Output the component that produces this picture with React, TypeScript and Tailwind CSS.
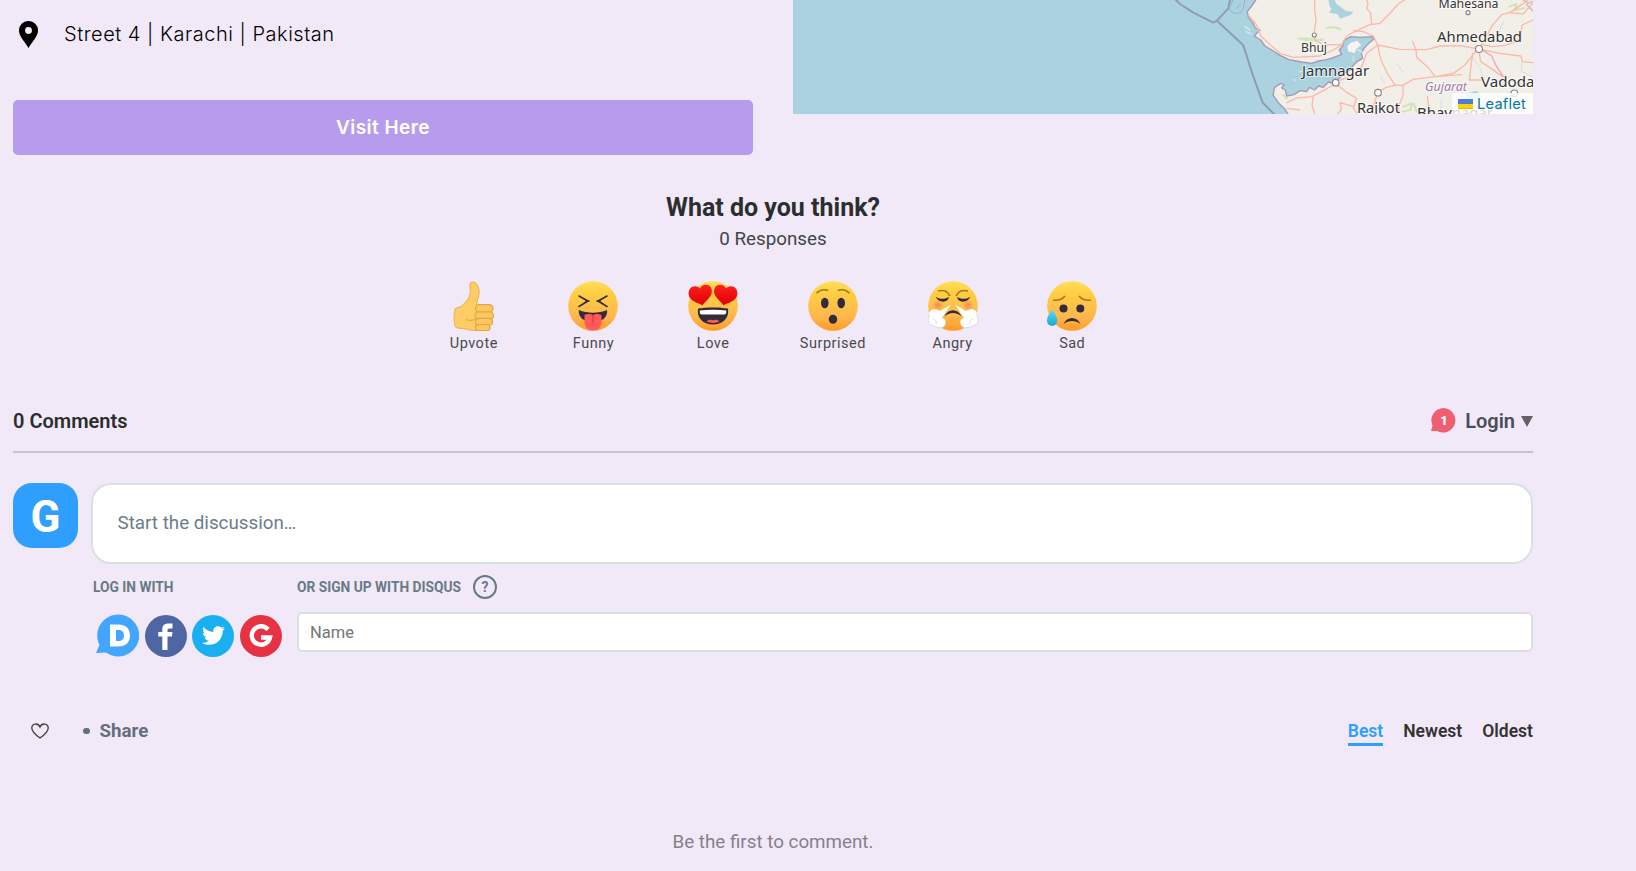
import React from "react";
import { FaTwitter } from "react-icons/fa";

function MapPreview() {
  return (
    <svg viewBox="793 0 740 114" width="740" height="114" className="block h-[114px] w-[740px]">
      <rect x="793" width="740" height="114" fill="#aad3df" />
      <g transform="translate(1140 0) scale(0.33333)" fill="none" strokeLinejoin="round" strokeLinecap="round">
        <path
          d="M350 -4L335 18L322 35L325 52L338 68L346 84L360 90L350 100L343 108L362 120L375 138L400 153L420 166L447 179L485 186L515 190L535 183L560 179L580 173L605 163L598 150L608 138L612 122L632 110L660 112L698 110L701 118L688 128L672 145L664 160L668 175L652 184L640 196L632 208L610 222L596 236L578 250L565 246L550 262L535 258L524 270L508 262L500 275L480 272L462 284L440 288L436 270L425 264L432 254L422 250L404 262L399 285L415 308L435 328L446 345L1190 345L1190 -4Z"
          fill="#f2efe9"
          stroke="#a597b8"
          strokeWidth="4"
        />
        <path d="M618 128L650 117L688 120L672 138L655 160L640 148L622 158L612 150Z" fill="#aad3df" />
        <path d="M632 128L652 122L664 136L648 146L645 160L624 154L622 138Z" fill="#f6f5ef" />
        <path d="M565 -4L568 15L574 28L567 38L592 42L600 56L618 50L632 45L640 36L618 32L606 24L590 12L582 -4Z" fill="#aad3df" />
        <path d="M465 113L500 112L525 116L553 115L550 123L510 125L480 120Z" fill="#d5e5bd" />
        <path d="M560 85C575 80 590 82 600 88M1108 20L1130 12L1125 30L1155 24M790 320L815 310L812 330L785 335M430 285L440 295M640 170V182M822 312L830 335" stroke="#cfe3b5" strokeWidth="6" />
        <path d="M1150 0L1165 10L1180 4M1160 14L1180 34" stroke="#c9bfd0" strokeWidth="5" />
        <path d="M975 282L1010 272L1025 290L990 298Z" fill="#aad3df" />
        <g stroke="#c5dfe6" strokeWidth="2.5">
          <path d="M1000 175L1022 205L1030 240M1090 65L1075 100L1100 125M770 190L788 215M905 300L900 340M1080 260L1110 240L1150 252M720 230L735 250M930 215L945 232M1145 185V215L1178 230" />
        </g>
        <g stroke="#fbb9a8" strokeWidth="4">
          <path d="M524 -4V30L528 60L522 103L525 120L550 135L606 133L620 108L650 92L690 74L720 70L748 42L775 12L800 -4" />
          <path d="M325 45L350 75L362 108L395 138L420 160L460 172L540 168L580 150L606 133M695 72L692 40L680 25L684 10L678 -4M640 92L670 95L700 108L713 135L780 148L860 149L900 138L960 137L1010 146" />
          <path d="M713 135L722 178L742 220L766 256L788 256L820 238L886 230L940 220L975 195L1010 150M713 135L680 160L665 200L640 226L600 240M818 125L828 150L830 172L862 200L886 230L965 224M1020 140L1036 115L1056 78L1085 44L1110 38L1150 42L1178 10M1110 38L1165 0" />
          <path d="M1030 135L1060 140L1095 136L1142 120L1146 75L1180 60M1030 150L1080 160L1142 168L1148 185L1180 188M1018 160L1022 185L1045 200L1088 230M998 160L988 240H1030M766 256L738 262L714 278L700 315M788 256L790 285L775 320L778 345M592 255L622 278L650 295L640 325L655 345M580 255L550 272L515 290L470 294L440 308M520 290L516 315L525 345M650 295L642 320L600 308L604 328L590 345M442 325L478 330M862 290L866 320L882 345" />
        </g>
        <path d="M1030 152L1055 168L1070 200L1090 230" stroke="#f1a3bd" strokeWidth="4" />
        <path d="M104 -4L120 12L160 38L220 68L231 62L265 25L271 -4M231 62L310 136L335 215L368 308L405 345" stroke="#8f9bb8" strokeWidth="6" />
        <path d="M280 -2L268 25C280 50 305 42 310 25L315 -2M290 25L302 12" stroke="#93b5cb" strokeWidth="3" />
        <path d="M315 80L330 90M318 95L335 102M462 239L465 241M480 215L484 214M648 147L668 158" stroke="#dcebed" strokeWidth="4" />
        <g fill="#fff" stroke="#8a8580" strokeWidth="3.5">
          <circle cx="523" cy="105" r="6" />
          <circle cx="984" cy="38" r="6" />
          <circle cx="1017" cy="147" r="10.5" />
          <circle cx="587" cy="248" r="10" />
          <circle cx="714" cy="278" r="10" />
          <circle cx="1123" cy="280" r="10" />
        </g>
      </g>
      <g fontFamily="'Noto Sans', sans-serif" fill="#333" stroke="#fff" strokeOpacity="0.7" strokeWidth="2" paintOrder="stroke">
        <text x="1438.5" y="8" fontSize="12.5" textLength="60" lengthAdjust="spacingAndGlyphs">Mahesana</text>
        <text x="1301" y="52" fontSize="13" textLength="26" lengthAdjust="spacingAndGlyphs">Bhuj</text>
        <text x="1437" y="42" fontSize="15" textLength="85" lengthAdjust="spacingAndGlyphs">Ahmedabad</text>
        <text x="1302" y="76" fontSize="15" textLength="67" lengthAdjust="spacingAndGlyphs">Jamnagar</text>
        <text x="1425" y="91" fontSize="13" fontStyle="italic" fill="#9c7ba6" textLength="42" lengthAdjust="spacingAndGlyphs">Gujarat</text>
        <text x="1481" y="87" fontSize="15" textLength="68" lengthAdjust="spacingAndGlyphs">Vadodara</text>
        <text x="1357" y="113" fontSize="15" textLength="43" lengthAdjust="spacingAndGlyphs">Rajkot</text>
        <text x="1417" y="118" fontSize="15" textLength="76" lengthAdjust="spacingAndGlyphs">Bhavnagar</text>
      </g>
    </svg>
  );
}

function Face({ children }: { children: React.ReactNode }) {
  return (
    <svg viewBox="0 0 50 50" className="size-[50px]" fill="none">
      <defs>
        <linearGradient id="skin" x1="0" y1="0" x2="0" y2="1">
          <stop offset="0" stopColor="#ffe05a" />
          <stop offset="0.25" stopColor="#fecd41" />
          <stop offset="0.7" stopColor="#feb84e" />
          <stop offset="1" stopColor="#ff9b27" />
        </linearGradient>
        <linearGradient id="heart" x1="0" y1="0" x2="0" y2="1">
          <stop offset="0" stopColor="#ff2020" />
          <stop offset="1" stopColor="#dd0000" />
        </linearGradient>
        <linearGradient id="drop" x1="0" y1="0" x2="0" y2="1">
          <stop offset="0" stopColor="#66d8f5" />
          <stop offset="1" stopColor="#16a9d5" />
        </linearGradient>
        <radialGradient id="blush">
          <stop offset="0" stopColor="#fa7768" stopOpacity="0.9" />
          <stop offset="1" stopColor="#fa8a58" stopOpacity="0" />
        </radialGradient>
      </defs>
      {children}
    </svg>
  );
}

const disc = <circle cx="25" cy="25" r="24.8" fill="url(#skin)" />;

const thumb = (
  <Face>
    <g transform="translate(2.5 0.3)">
      <path d="M18.500 13C19.500 9 18 5 18.500 2.500C19 0 23 .2 25 2.500C28 6 28.500 13 26 18L25 24L27 47.500C25 50 20 49.500 16 48L5 46.500C2 45 1.800 32 4 27C7 26 10 25.500 12 23C16 19 17.500 17 18.500 13Z" fill="#fecc65" stroke="#e5b052" strokeWidth="1" />
      <path d="M14 38C18 40 22 39 26 37" stroke="#d89b3c" strokeWidth="0.8" />
      <g fill="#fdc75d" stroke="#dda84a" strokeWidth="1.200">
        <rect x="24" y="23.300" width="17.500" height="8" rx="4" />
        <rect x="23.500" y="30.500" width="18.500" height="7.500" rx="3.700" />
        <rect x="24" y="37" width="17" height="7" rx="3.500" />
        <rect x="24" y="43.200" width="14.500" height="6.200" rx="3" />
      </g>
    </g>
  </Face>
);

const funny = (
  <Face>
    {disc}
    <path d="M11 15L20 20L11 25.500M39 15L30 20L39 25.500" stroke="#302b3d" strokeWidth="1.500" strokeLinecap="round" />
    <path d="M14 17L22.500 20L14 23L18 20ZM36 17L27.500 20L36 23L32 20Z" fill="#302b3d" />
    <path d="M10.800 29C19 32.500 31 32.500 39 29C40 36 34.500 41 25 41C15.500 41 10 36 10.800 29Z" fill="#302b3d" />
    <path d="M16.500 34C19 32.500 23 32.500 25 34C27 32.500 31 32.500 33.500 34V41C33.500 46 30 49.500 25 49.500C20 49.500 16.500 46 16.500 41Z" fill="#ff5a58" />
    <path d="M25 34V42" stroke="#d93140" strokeWidth="1" />
  </Face>
);

const love = (
  <Face>
    {disc}
    <path d="M.6 13C.3 8 4 4.300 8.500 5.500C10 5.700 11 6.500 12 7.500C13 4.500 17 2.800 20.500 4.300C24 6 25 11 22.500 15C20.500 18.500 16 21.500 14.500 24.300C11 22 1 20.500 .6 13Z" fill="url(#heart)" />
    <path d="M49.400 13C49.700 8 46 4.300 41.500 5.500C40 5.700 39 6.500 38 7.500C37 4.500 33 2.800 29.500 4.300C26 6 25 11 27.500 15C29.500 18.500 34 21.500 35.500 24.300C39 22 49 20.500 49.400 13Z" fill="url(#heart)" />
    <path d="M10 27.500C18 26 32 26 40 27.500C41.500 37 35 43.500 25 43.500C15 43.500 8.500 37 10 27.500Z" fill="#302b3d" />
    <path d="M11.800 29.500C20 28.500 30 28.500 38.200 29.500C38.500 32 38 33.500 36 33.500H14C12 33.500 11.500 32 11.800 29.500Z" fill="#fff" />
    <path d="M18.500 40.500C20 38.300 23 38.300 25 39.200C27 38.300 30 38.300 31.500 40.500C28 42.400 22 42.400 18.500 40.500Z" fill="#ff5a58" />
  </Face>
);

const surprised = (
  <Face>
    {disc}
    <path d="M8.500 12.200C12 8.800 16 8 20.300 9.600M41.500 12.200C38 8.800 34 8 29.700 9.600" stroke="#9c7a22" strokeWidth="1.600" />
    <ellipse cx="16.800" cy="22" rx="3.800" ry="5.200" fill="#302b3d" />
    <ellipse cx="33.200" cy="22" rx="3.800" ry="5.200" fill="#302b3d" />
    <ellipse cx="25" cy="38.200" rx="4.200" ry="4.500" fill="#302b3d" />
  </Face>
);

const angry = (
  <Face>
    {disc}
    <circle cx="10" cy="24" r="6" fill="url(#blush)" />
    <circle cx="40" cy="24" r="6" fill="url(#blush)" />
    <path d="M10 10C15 8.500 20 10 21.800 15M40 10C35 8.500 30 10 28.200 15" stroke="#9c7a22" strokeWidth="1.500" />
    <path d="M7.500 15.500C11 18.500 17 18.500 21 16C20 22.300 10.500 22.300 7.500 15.500ZM42.500 15.500C39 18.500 33 18.500 29 16C30 22.300 39.500 22.300 42.500 15.500Z" fill="#302b3d" />
    <path d="M23 23.500L12 30C6 26 0 29 1.500 34C-1 39 0 44 5 44.500C9 47 15 48 17 44C19 39 16 37 14 37ZM27 23.500L38 30C44 26 50 29 48.500 34C51 39 50 44 45 44.500C41 47 35 48 33 44C31 39 34 37 36 37Z" fill="#fff" />
    <path d="M1.500 34C-1 39 0 44 5 44.500C9 47 15 48 17 44M48.500 34C51 39 50 44 45 44.500C41 47 35 48 33 44M8 43C9 40 7 38 5 38M42 43C41 40 43 38 45 38" stroke="#d7dde5" strokeWidth="1" />
    <path d="M16.500 35.500C20 27.300 30 27.300 33.500 35.500C29 30.800 21 30.800 16.500 35.500Z" fill="#302b3d" />
  </Face>
);

const sad = (
  <Face>
    {disc}
    <path d="M6 19C11 20 15 18.500 18 15M44 19C39 20 35 18.500 32 15" stroke="#9c7a22" strokeWidth="1.600" />
    <circle cx="16.500" cy="27.500" r="4" fill="#302b3d" />
    <circle cx="33.300" cy="27.500" r="4" fill="#302b3d" />
    <path d="M16.500 43C20 35 30 35 33.500 43C29 39 21 39 16.500 43Z" fill="#302b3d" />
    <path d="M5.200 28C7 32 10.200 35 10.200 39.500C10.200 43 8 44.800 5.200 44.800C2.300 44.800 0 43 0 39.500C0 35 3.500 32 5.200 28Z" fill="url(#drop)" />
  </Face>
);

const reactions = [
  { label: "Upvote", icon: thumb },
  { label: "Funny", icon: funny },
  { label: "Love", icon: love },
  { label: "Surprised", icon: surprised },
  { label: "Angry", icon: angry },
  { label: "Sad", icon: sad },
];

function SocialLogins() {
  return (
    <div className="mt-[14px] flex gap-[5.500px] pl-[3px]">
      <svg viewBox="0 0 43 43" className="size-[43px]" fill="none">
        <path d="M22.300.5A21 21 0 1 1 10 38.600L0 39L3.500 31A21 21 0 0 1 22.300.5Z" fill="#42a5ff" />
        <path fillRule="evenodd" d="M14 10.500H22C30 10.500 34 15 34 21.500C34 28 30 32.500 22 32.500H14ZM20 16V27H22C26 27 28 25 28 21.500C28 18 26 16 22 16Z" fill="#fff" />
      </svg>
      <svg viewBox="0 0 42 42" className="mt-[0.500px] size-[42px]">
        <circle cx="21" cy="21" r="21" fill="#4e66a3" />
        <path d="M17.300 35V21.500H13.300V16.900H17.300V14.500C17.300 10.500 19.500 8.500 23.500 8.500H27.500V13.500H24.600C22.900 13.500 22.500 14.200 22.500 15.500V16.900H27.500L26.900 21.500H22.500V35Z" fill="#fff" />
      </svg>
      <div className="mt-[0.500px] flex size-[42px] items-center justify-center rounded-full bg-[#1aaff0] text-white">
        <FaTwitter size={23} />
      </div>
      <svg viewBox="0 0 42 42" className="mt-[0.500px] size-[42px]" fill="none">
        <circle cx="21" cy="21" r="21" fill="#e63242" />
        <path d="M28 14.500A9.200 9.200 0 1 0 30 22.500H21" stroke="#fff" strokeWidth="4.400" />
      </svg>
    </div>
  );
}

export default function App() {
  return (
    <main className="h-[871px] w-full overflow-hidden bg-[#f2e9f8] pl-[13px] font-['Roboto',sans-serif] text-[#2a2e2e]">
      <div className="w-[1520px]">
        <section className="grid h-[155px] grid-cols-2 gap-x-10">
          <div className="font-['Inter',sans-serif]">
            <div className="flex h-[68px] items-center">
              <svg viewBox="0 0 19 27" className="ml-[6px] mt-px h-[27px] w-[19px]">
                <path fillRule="evenodd" d="M9.500 0A9.300 9.300 0 0 1 19 9.500C19 15.500 13.500 20 9.500 27C5.500 20 0 15.500 0 9.500A9.300 9.300 0 0 1 9.500 0ZM9.500 6A3.400 3.400 0 1 0 9.500 12.900A3.400 3.400 0 1 0 9.500 6Z" />
              </svg>
              <p className="ml-[26px] text-[20px] font-light tracking-[0.520px] text-black">Street 4 | Karachi | Pakistan</p>
            </div>
            <button className="mt-8 flex h-[55px] w-full items-center justify-center rounded-[5px] bg-[#b79ced] pt-px text-[19px] font-semibold tracking-[0.450px] text-white">
              Visit Here
            </button>
          </div>
          <div className="relative h-[114px] overflow-hidden">
            <MapPreview />
            <div className="absolute bottom-0 right-0 flex h-[21px] w-[81px] items-center gap-1 bg-white/80 pl-[6px] font-['Inter',sans-serif] text-[14.500px] tracking-[0.300px] text-[#0078a8]">
              <svg viewBox="0 0 15 10" className="h-[10px] w-[15px] shrink-0">
                <path fill="#4c7be1" d="M0 0h15v5H0z" />
                <path fill="#ffd500" d="M0 5h15v4H0z" />
                <path fill="#e0bc00" d="M0 9h15v1H0z" />
              </svg>
              Leaflet
            </div>
          </div>
        </section>

        <section className="flex flex-col items-center pt-[38px]">
          <h2 className="text-[25px] font-bold leading-[30px]">What do you think?</h2>
          <p className="mt-px text-[18.800px] leading-[31px] text-[#414548]">0 Responses</p>
          <div className="mt-[26px] flex">
            {reactions.map(({ label, icon }) => (
              <div key={label} className="flex w-[119.700px] flex-col items-center">
                {icon}
                <span className="mt-[3px] text-[14.500px] leading-5 tracking-[0.500px] text-[#484a4d]">{label}</span>
              </div>
            ))}
          </div>
        </section>

        <header className="mt-9 flex h-[63px] items-center justify-between border-b-2 border-[#c2c6cc] font-semibold">
          <h3 className="text-[20px] leading-6">0 Comments</h3>
          <div className="flex items-center text-[20px] text-[#494e58]">
            <svg viewBox="0 0 25 25" className="mr-[9px] size-[25px]">
              <path d="M12.700 0A12.300 12.300 0 1 1 6 23L0 23L1.500 17.500A12.300 12.300 0 0 1 12.700 0Z" fill="#f05f70" />
              <text x="13" y="16.800" textAnchor="middle" fontSize="13" fontWeight="900" fill="#fff">1</text>
            </svg>
            Login
            <svg viewBox="0 0 12 11" className="ml-[6px] mt-px h-[11px] w-3">
              <path d="M0 0H12L6 11Z" fill="#656166" />
            </svg>
          </div>
        </header>

        <section className="mt-[30px] flex">
          <div className="flex size-[65px] shrink-0 items-center justify-center rounded-[19px] bg-[#2e9fff] pt-[2px] text-[44px] font-bold text-white">
            G
          </div>
          <div className="ml-[13px] flex-1">
            <div className="flex h-[81px] items-center rounded-[20px] border-2 border-[#dbdfe4] bg-white pl-[24.500px] text-[18.800px] text-[#6b7c8a]">
              Start the discussion…
            </div>
            <div className="flex pl-[2px] pt-[11px]">
              <div className="w-[204px] shrink-0">
                <h6 className="text-[13.750px] font-bold leading-[25px] text-[#687a86]">LOG IN WITH</h6>
                <SocialLogins />
              </div>
              <div className="flex-1">
                <h6 className="flex h-6 items-center text-[13.750px] font-bold text-[#687a86]">
                  OR SIGN UP WITH DISQUS
                  <span className="ml-3 flex size-6 items-center justify-center rounded-full border-2 border-[#687a86] text-[14px]">?</span>
                </h6>
                <input
                  placeholder="Name"
                  className="mt-[13px] block h-10 w-full rounded-[5px] border-2 border-[#dbdfe4] bg-white pl-[11px] text-[16.500px] placeholder:text-[#757575]"
                />
              </div>
            </div>
          </div>
        </section>

        <nav className="mt-[49px] flex h-[50px] items-center justify-between">
          <div className="flex items-center text-[18.700px] font-bold text-[#656f7c]">
            <svg viewBox="0 0 18 16" className="ml-[18px] h-4 w-[18px]" fill="none">
              <path d="M9 15C4 11.500.8 8.500.8 5C.8 .5 7-.6 9 4C11-.6 17.200.5 17.200 5C17.200 8.500 14 11.500 9 15Z" stroke="#3f3c43" strokeWidth="1.300" />
            </svg>
            <span className="ml-[34px] h-1.5 w-[7px] rounded-full bg-[#656f7c]" />
            <span className="ml-[9.500px]">Share</span>
          </div>
          <div className="flex gap-5 pt-1 text-[17.500px] font-semibold leading-[23px] text-[#333]">
            <span className="border-b-[3px] border-[#2e9fff] text-[#2e9fff]">Best</span>
            <span>Newest</span>
            <span>Oldest</span>
          </div>
        </nav>

        <p className="mt-[74px] text-center text-[18.800px] leading-6 text-[#85808a]">Be the first to comment.</p>
      </div>
    </main>
  );
}
